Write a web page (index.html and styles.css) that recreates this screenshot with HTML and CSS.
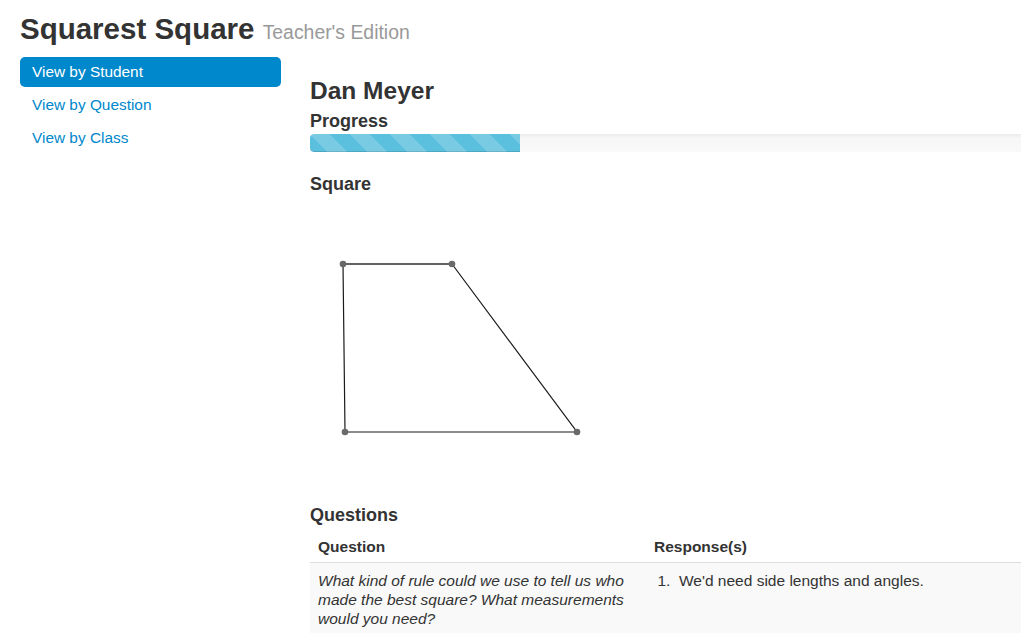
FILE: index.html
```html
<!DOCTYPE html>
<html>
<head>
<meta charset="utf-8">
<link rel="stylesheet" href="styles.css">
</head>
<body>
<header class="page-header">
  <h1 class="title">Squarest Square <small class="subtitle">Teacher's Edition</small></h1>
</header>
<div class="layout">
  <nav class="sidebar">
    <ul class="nav-pills">
      <li><a class="pill active" href="#">View by Student</a></li>
      <li><a class="pill" href="#">View by Question</a></li>
      <li><a class="pill" href="#">View by Class</a></li>
    </ul>
  </nav>
  <main class="main">
    <h2 class="student">Dan Meyer</h2>
    <h3 class="section">Progress</h3>
    <div class="progress"><div class="bar" style="width: 210px"></div></div>
    <h3 class="section square-title">Square</h3>
    <svg class="canvas" width="400" height="300" viewBox="0 0 400 300">
      <polygon points="33,68 142,68 267,236 35,236" fill="none" stroke="#1a1a1a" stroke-width="1.2"/>
      <line x1="33" y1="68" x2="142" y2="68" stroke="#555" stroke-width="1.4"/>
      <circle cx="33" cy="68" r="3.3" fill="#6a6a6a"/>
      <circle cx="142" cy="68" r="3.3" fill="#6a6a6a"/>
      <circle cx="267" cy="236" r="3.3" fill="#6a6a6a"/>
      <circle cx="35" cy="236" r="3.3" fill="#6a6a6a"/>
    </svg>
    <h3 class="section">Questions</h3>
    <table class="qtable">
      <thead>
        <tr><th class="col-q">Question</th><th>Response(s)</th></tr>
      </thead>
      <tbody>
        <tr>
          <td class="question">What kind of rule could we use to tell us who made the best square? What measurements would you need?</td>
          <td><ol class="responses"><li>We'd need side lengths and angles.</li></ol></td>
        </tr>
      </tbody>
    </table>
  </main>
</div>
</body>
</html>
```

FILE: styles.css
```css
html, body {
  margin: 0;
  padding: 0;
  background: #fff;
  color: #333;
  font-family: "Liberation Sans", Arial, Helvetica, sans-serif;
  font-size: 15.5px;
  line-height: 20px;
  overflow: hidden;
}

.page-header {
  padding: 11px 0 0 20px;
}

.title {
  margin: 0;
  font-size: 29.5px;
  line-height: 36px;
  font-weight: bold;
  color: #333;
}

.subtitle {
  font-size: 19.4px;
  font-weight: normal;
  color: #999;
}

.layout {
  display: flex;
  gap: 29px;
  padding: 7px 0 0 20px;
}

.sidebar {
  width: 261px;
  flex: none;
}

.nav-pills {
  list-style: none;
  margin: 0;
  padding: 0;
  display: flex;
  flex-direction: column;
  gap: 3px;
}

.pill {
  display: block;
  height: 30px;
  line-height: 30px;
  padding: 0 12px;
  border-radius: 5px;
  color: #0088cc;
  text-decoration: none;
  font-size: 15.4px;
}

.pill.active {
  background: #0088cc;
  color: #fff;
}

.main {
  flex: 1;
  min-width: 0;
  padding-top: 19px;
}

.student {
  margin: 0;
  font-size: 24.5px;
  line-height: 30px;
  font-weight: bold;
  color: #333;
}

.section {
  margin: 3px 0 0;
  font-size: 18px;
  line-height: 25px;
  font-weight: bold;
  color: #333;
}

.progress {
  height: 18px;
  background: linear-gradient(#ebebeb, #f7f7f7 4px, #f9f9f9);
  border-radius: 4px 0 0 4px;
  overflow: hidden;
}

.bar {
  height: 100%;
  background-color: #5bc0de;
  background-image: linear-gradient(45deg,
    rgba(255,255,255,.18) 25%, transparent 25%, transparent 50%,
    rgba(255,255,255,.18) 50%, rgba(255,255,255,.18) 75%, transparent 75%, transparent);
  background-size: 40px 40px;
  box-shadow: inset 0 -1px 0 rgba(0,0,0,.12);
  border-radius: 4px 0 0 4px;
}

.square-title {
  margin-top: 20px;
  line-height: 24px;
}

.canvas {
  display: block;
  margin-bottom: 7px;
}

.qtable {
  width: 100%;
  border-collapse: collapse;
  margin-top: 0;
}

.qtable th {
  text-align: left;
  font-weight: bold;
  font-size: 15.5px;
  line-height: 20px;
  padding: 9px 8px 5px;
  vertical-align: bottom;
}

.qtable th.col-q {
  width: 320px;
}

.qtable td {
  border-top: 1px solid #dddddd;
  background: #f9f9f9;
  padding: 8px 8px 6px;
  vertical-align: top;
  font-size: 15.5px;
  line-height: 19px;
}

.question {
  font-style: italic;
}

.responses {
  margin: 0;
  padding-left: 25px;
}

.responses li::marker {
  content: counter(list-item) ".\00a0\00a0";
}
```
